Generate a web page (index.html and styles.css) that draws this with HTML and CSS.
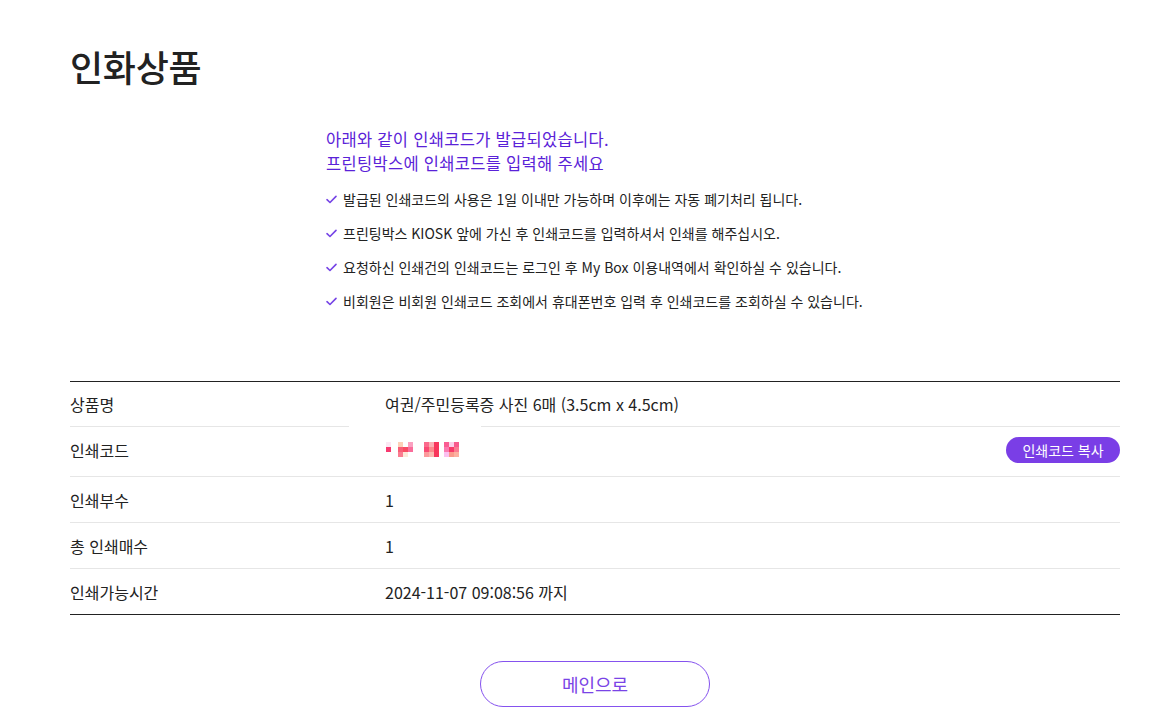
FILE: index.html
```html
<!DOCTYPE html>
<html lang="ko">
<head>
<meta charset="utf-8">
<title>인화상품</title>
<link rel="stylesheet" href="styles.css">
</head>
<body>
<div class="page">
  <h1 class="title">인화상품</h1>

  <section class="notice">
    <p class="notice-head"><span class="head-line">아래와 같이 인쇄코드가 발급되었습니다.</span><span class="head-line">프린팅박스에 인쇄코드를 입력해 주세요</span></p>
    <ul class="notice-list">
      <li><svg class="chk" viewBox="0 0 12 10"><path d="M1 5.2 L4.3 8.3 L11 1.5" fill="none" stroke="currentColor" stroke-width="1.8" stroke-linecap="round" stroke-linejoin="round"/></svg>발급된 인쇄코드의 사용은 1일 이내만 가능하며 이후에는 자동 폐기처리 됩니다.</li>
      <li><svg class="chk" viewBox="0 0 12 10"><path d="M1 5.2 L4.3 8.3 L11 1.5" fill="none" stroke="currentColor" stroke-width="1.8" stroke-linecap="round" stroke-linejoin="round"/></svg>프린팅박스 KIOSK 앞에 가신 후 인쇄코드를 입력하셔서 인쇄를 해주십시오.</li>
      <li><svg class="chk" viewBox="0 0 12 10"><path d="M1 5.2 L4.3 8.3 L11 1.5" fill="none" stroke="currentColor" stroke-width="1.8" stroke-linecap="round" stroke-linejoin="round"/></svg>요청하신 인쇄건의 인쇄코드는 로그인 후 My Box 이용내역에서 확인하실 수 있습니다.</li>
      <li><svg class="chk" viewBox="0 0 12 10"><path d="M1 5.2 L4.3 8.3 L11 1.5" fill="none" stroke="currentColor" stroke-width="1.8" stroke-linecap="round" stroke-linejoin="round"/></svg>비회원은 비회원 인쇄코드 조회에서 휴대폰번호 입력 후 인쇄코드를 조회하실 수 있습니다.</li>
    </ul>
  </section>

  <div class="info">
    <div class="row row-first">
      <div class="label">상품명</div>
      <div class="value">여권/주민등록증 사진 6매 (3.5cm x 4.5cm)</div>
    </div>
    <div class="row row-code">
      <div class="label">인쇄코드</div>
      <div class="value code-cell">
        <span class="mask"></span>
        <svg class="code" width="75" height="16" viewBox="0 0 75 16">
          <rect x="0" y="0" width="5" height="5" fill="#fbe8f4"/>
          <rect x="0" y="5" width="5" height="5" fill="#f73a70"/>
          <rect x="12" y="0" width="5" height="5" fill="#fdd0b8"/>
          <rect x="12" y="5" width="5" height="5" fill="#f95e76"/>
          <rect x="12" y="10" width="5" height="5" fill="#fb7c90"/>
          <rect x="17" y="5" width="5" height="5" fill="#f84c62"/>
          <rect x="17" y="10" width="5" height="5" fill="#fde8d8"/>
          <rect x="22" y="0" width="5" height="5" fill="#fba0c0"/>
          <rect x="22" y="5" width="5" height="5" fill="#fa6c9a"/>
          <rect x="38" y="0" width="5" height="5" fill="#fb6a8c"/>
          <rect x="38" y="5" width="5" height="5" fill="#f94a74"/>
          <rect x="38" y="10" width="5" height="5" fill="#fc9a9c"/>
          <rect x="43" y="0" width="5" height="5" fill="#fbb0b4"/>
          <rect x="43" y="5" width="5" height="5" fill="#fc8a8c"/>
          <rect x="43" y="10" width="5" height="5" fill="#fbb8b0"/>
          <rect x="48" y="0" width="5" height="15" fill="#f8365c"/>
          <rect x="58" y="0" width="5" height="5" fill="#fa5c92"/>
          <rect x="58" y="5" width="5" height="5" fill="#fb7ab0"/>
          <rect x="58" y="10" width="5" height="5" fill="#fbc0f0"/>
          <rect x="63" y="0" width="5" height="5" fill="#fbd0e8"/>
          <rect x="63" y="5" width="5" height="5" fill="#f73a6a"/>
          <rect x="63" y="10" width="5" height="5" fill="#fb9a8c"/>
          <rect x="68" y="0" width="5" height="5" fill="#f85a8c"/>
          <rect x="68" y="5" width="5" height="5" fill="#fb7a90"/>
          <rect x="68" y="10" width="5" height="5" fill="#fcb0a0"/>
        </svg>
        <button class="copy-btn" type="button">인쇄코드 복사</button>
      </div>
    </div>
    <div class="row">
      <div class="label">인쇄부수</div>
      <div class="value">1</div>
    </div>
    <div class="row">
      <div class="label">총 인쇄매수</div>
      <div class="value">1</div>
    </div>
    <div class="row">
      <div class="label">인쇄가능시간</div>
      <div class="value">2024-11-07 09:08:56 까지</div>
    </div>
  </div>

  <div class="actions">
    <button class="main-btn" type="button">메인으로</button>
  </div>
</div>
</body>
</html>
```

FILE: styles.css
```css
* { box-sizing: border-box; }

html, body {
  margin: 0;
  padding: 0;
  background: #fff;
}

body {
  font-family: "Noto Sans CJK KR", "Noto Sans", sans-serif;
  color: #222;
}

.page {
  width: 1050px;
  margin-left: 70px;
  padding-top: 40px;
}

.title {
  margin: 0;
  font-size: 36px;
  font-weight: 500;
  line-height: 52px;
  color: #222;
  letter-spacing: -0.3px;
}

.notice {
  margin: 35px 0 0 256px;
}

.notice-head {
  margin: 0;
  font-size: 16.5px;
  letter-spacing: 0.3px;
  color: #5a22d8;
}

.head-line {
  display: block;
  line-height: 24px;
}

.notice-list {
  list-style: none;
  margin: 14px 0 0;
  padding: 0;
}

.notice-list li {
  display: flex;
  align-items: center;
  font-size: 14px;
  line-height: 20px;
  height: 20px;
  margin-bottom: 14px;
  color: #222;
}

.chk {
  width: 11px;
  height: 9px;
  margin-right: 6px;
  color: #7644e6;
  flex: none;
}

.info {
  margin-top: 70px;
  border-top: 1px solid #222;
  border-bottom: 1px solid #222;
}

.row {
  display: flex;
  align-items: center;
  height: 46px;
  border-top: 1px solid #e6e6e6;
  font-size: 16px;
}

.row-first {
  border-top: 0;
  height: 44px;
}

.row-code {
  height: 50px;
  padding-bottom: 3px;
}

.label {
  width: 315px;
  flex: none;
}

.value {
  flex: 1;
  display: flex;
  align-items: center;
}

.code-cell {
  position: relative;
  align-self: stretch;
}

.mask {
  position: absolute;
  left: -36px;
  top: -1px;
  width: 132px;
  height: 1px;
  background: #fff;
}

.code {
  display: block;
  margin-left: 1px;
}

.copy-btn {
  margin-left: auto;
  height: 26px;
  width: 114px;
  border: 0;
  border-radius: 13px;
  background: #7a3ee6;
  color: #fff;
  font-family: inherit;
  font-size: 14px;
  padding: 0;
  cursor: pointer;
}

.actions {
  display: flex;
  justify-content: center;
  margin-top: 46px;
}

.main-btn {
  width: 230px;
  height: 46px;
  border: 1px solid #8552ee;
  border-radius: 23px;
  background: #fff;
  color: #7a44e6;
  font-family: inherit;
  font-size: 18px;
  padding: 0;
  cursor: pointer;
}
```
